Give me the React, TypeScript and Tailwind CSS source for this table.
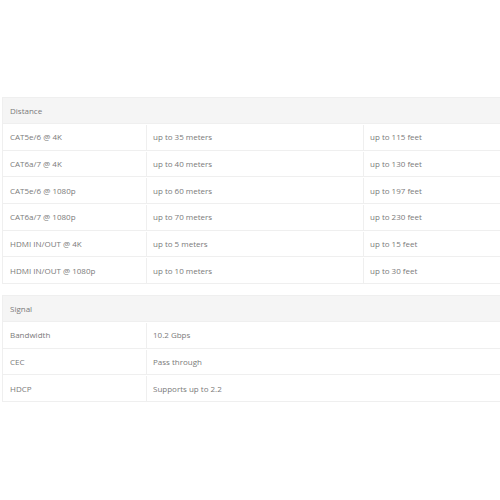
const distance = [
  ["CAT5e/6 @ 4K", "up to 35 meters", "up to 115 feet"],
  ["CAT6a/7 @ 4K", "up to 40 meters", "up to 130 feet"],
  ["CAT5e/6 @ 1080p", "up to 60 meters", "up to 197 feet"],
  ["CAT6a/7 @ 1080p", "up to 70 meters", "up to 230 feet"],
  ["HDMI IN/OUT @ 4K", "up to 5 meters", "up to 15 feet"],
  ["HDMI IN/OUT @ 1080p", "up to 10 meters", "up to 30 feet"],
];

const signal = [
  ["Bandwidth", "10.2 Gbps"],
  ["CEC", "Pass through"],
  ["HDCP", "Supports up to 2.2"],
];

function SpecTable({ title, rows }: { title: string; rows: string[][] }) {
  return (
    <div className="ml-[2px] w-[520px] border border-[#efefef]">
      <div className="flex h-[25px] items-center bg-[#f5f5f5] px-[7px] pt-px">{title}</div>
      {rows.map((row) => (
        <div key={row[0]} className="flex h-[26.67px] border-t border-[#efefef] pt-px">
          <div className="flex w-[144px] items-center border-r border-[#efefef] px-[7px]">{row[0]}</div>
          {row.length === 3 ? (
            <>
              <div className="flex w-[217px] items-center border-r border-[#efefef] px-[6px]">{row[1]}</div>
              <div className="flex flex-1 items-center px-[6px]">{row[2]}</div>
            </>
          ) : (
            <div className="flex flex-1 items-center px-[6px]">{row[1]}</div>
          )}
        </div>
      ))}
    </div>
  );
}

export default function App() {
  return (
    <div
      className="h-[500px] w-[500px] overflow-hidden bg-white pt-[97px] text-[8px] text-[#7a7a7a]"
      style={{ fontFamily: '"Open Sans", sans-serif' }}
    >
      <SpecTable title="Distance" rows={distance} />
      <div className="h-[11px]" />
      <SpecTable title="Signal" rows={signal} />
    </div>
  );
}
